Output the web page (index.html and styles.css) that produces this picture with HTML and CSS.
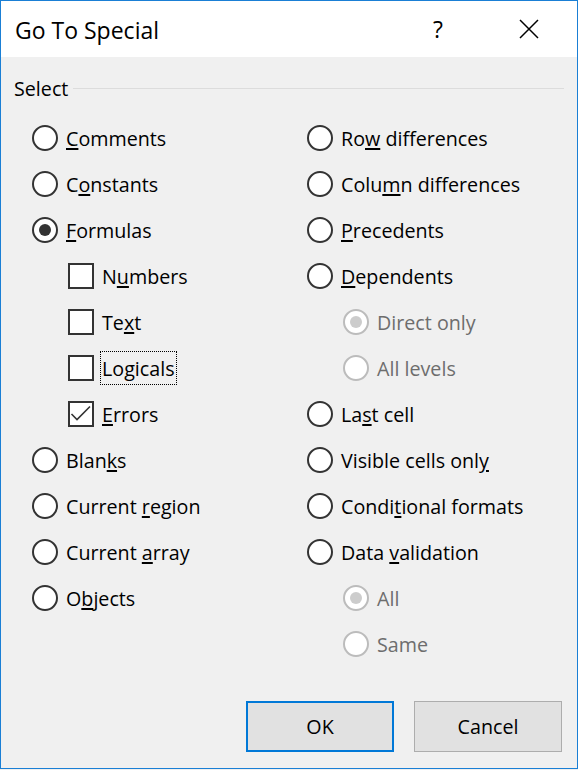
FILE: index.html
```html
<!DOCTYPE html>
<html lang="en">
<head>
<meta charset="utf-8">
<title>Go To Special</title>
<link rel="stylesheet" href="styles.css">
</head>
<body>
<div class="window">
  <header class="titlebar">
    <span class="title">Go To Special</span>
    <div class="caption-buttons">
      <span class="help">?</span>
      <svg class="close" width="20" height="20" viewBox="0 0 20 20"><path d="M1 1 L19 19 M19 1 L1 19" stroke="#000" stroke-width="1.5" fill="none"/></svg>
    </div>
  </header>
  <main class="content">
    <div class="group-head"><span class="group-label">Select</span><span class="rule"></span></div>
    <div class="columns">
      <ul class="col">
        <li class="row"><span class="radio"></span><span class="label"><span class="u">C</span>omments</span></li>
        <li class="row"><span class="radio"></span><span class="label">C<span class="u">o</span>nstants</span></li>
        <li class="row"><span class="radio checked"></span><span class="label"><span class="u">F</span>ormulas</span></li>
        <li class="row sub"><span class="check"></span><span class="label">N<span class="u">u</span>mbers</span></li>
        <li class="row sub"><span class="check"></span><span class="label">Te<span class="u">x</span>t</span></li>
        <li class="row sub"><span class="check"></span><span class="label focus">Lo<span class="u">g</span>icals</span></li>
        <li class="row sub"><span class="check"><svg width="22" height="22" viewBox="0 0 22 22"><path d="M1.5 11 L7 16.5 L20 3.5" stroke="#333" stroke-width="1.6" fill="none"/></svg></span><span class="label"><span class="u">E</span>rrors</span></li>
        <li class="row"><span class="radio"></span><span class="label">Blan<span class="u">k</span>s</span></li>
        <li class="row"><span class="radio"></span><span class="label">Current <span class="u">r</span>egion</span></li>
        <li class="row"><span class="radio"></span><span class="label">Current <span class="u">a</span>rray</span></li>
        <li class="row"><span class="radio"></span><span class="label">O<span class="u">b</span>jects</span></li>
      </ul>
      <ul class="col">
        <li class="row"><span class="radio"></span><span class="label">Ro<span class="u">w</span> differences</span></li>
        <li class="row"><span class="radio"></span><span class="label">Colu<span class="u">m</span>n differences</span></li>
        <li class="row"><span class="radio"></span><span class="label"><span class="u">P</span>recedents</span></li>
        <li class="row"><span class="radio"></span><span class="label"><span class="u">D</span>ependents</span></li>
        <li class="row sub disabled"><span class="radio checked"></span><span class="label">Direct only</span></li>
        <li class="row sub disabled"><span class="radio"></span><span class="label">All levels</span></li>
        <li class="row"><span class="radio"></span><span class="label">La<span class="u">s</span>t cell</span></li>
        <li class="row"><span class="radio"></span><span class="label">Visible cells onl<span class="u">y</span></span></li>
        <li class="row"><span class="radio"></span><span class="label">Condi<span class="u">t</span>ional formats</span></li>
        <li class="row"><span class="radio"></span><span class="label">Data <span class="u">v</span>alidation</span></li>
        <li class="row sub disabled"><span class="radio checked"></span><span class="label">All</span></li>
        <li class="row sub disabled"><span class="radio"></span><span class="label">Same</span></li>
      </ul>
    </div>
    <div class="buttons">
      <button class="btn default">OK</button>
      <button class="btn">Cancel</button>
    </div>
  </main>
</div>
</body>
</html>
```
FILE: styles.css
```css
* { box-sizing: border-box; }
html, body { margin: 0; padding: 0; background: #f0f0f0; }
body { font-family: "Open Sans", "Noto Sans", sans-serif; color: #000; }

.window {
  width: 578px;
  height: 769px;
  border: 1px solid #1a7fd5;
  background: #f0f0f0;
  display: flex;
  flex-direction: column;
}

.titlebar {
  height: 56px;
  background: #fff;
  display: flex;
  align-items: center;
  padding: 0 38px 0 14px;
}
.title { font-size: 23px; padding-top: 2px; }
.caption-buttons { margin-left: auto; display: flex; align-items: center; gap: 76px; }
.help { font-size: 23px; line-height: 1; }
.close { display: block; }

.content {
  flex: 1;
  display: flex;
  flex-direction: column;
  padding: 18px 15px 16px 13px;
  font-size: 19.7px;
}

.group-head { display: flex; align-items: center; height: 28px; gap: 5px; }
.group-label { line-height: 1; }
.rule { flex: 1; height: 1px; background: #dcdcdc; margin-top: -1px; margin-right: -2px; }

.columns {
  display: grid;
  grid-template-columns: 275px 1fr;
  padding-left: 18px;
  margin-top: 12px;
}
.col { list-style: none; margin: 0; padding: 0; }
.row { height: 46px; display: flex; align-items: center; gap: 8px; }
.row.sub { padding-left: 36px; }

.radio {
  width: 26px; height: 26px;
  border: 2px solid #333;
  border-radius: 50%;
  background: #fff;
  display: inline-flex;
  align-items: center;
  justify-content: center;
  flex: none;
}
.radio.checked::after {
  content: "";
  width: 12px; height: 12px;
  border-radius: 50%;
  background: #333;
}
.check {
  width: 26px; height: 26px;
  border: 2px solid #333;
  background: #fff;
  flex: none;
  display: inline-flex;
}
.check svg { display: block; }

.label { line-height: 1; white-space: nowrap; padding-top: 2px; }
.label.focus { border: 1px dotted #000; padding: 7px 1px 6px; margin-left: -2px; }
.u { text-decoration: underline; text-decoration-thickness: 2px; text-underline-offset: 2px; }

.disabled .label { color: #6d6d6d; }
.disabled .radio { border-color: #bcbcbc; }
.disabled .radio.checked::after { background: #cccccc; }

.buttons {
  margin-top: auto;
  display: flex;
  justify-content: flex-end;
  gap: 20px;
}
.btn {
  width: 148px; height: 51px;
  font-family: inherit;
  font-size: 19.7px;
  color: #000;
  background: #e1e1e1;
  border: 1px solid #adadad;
  padding: 0;
}
.btn.default { border: 2px solid #0078d7; }
```
